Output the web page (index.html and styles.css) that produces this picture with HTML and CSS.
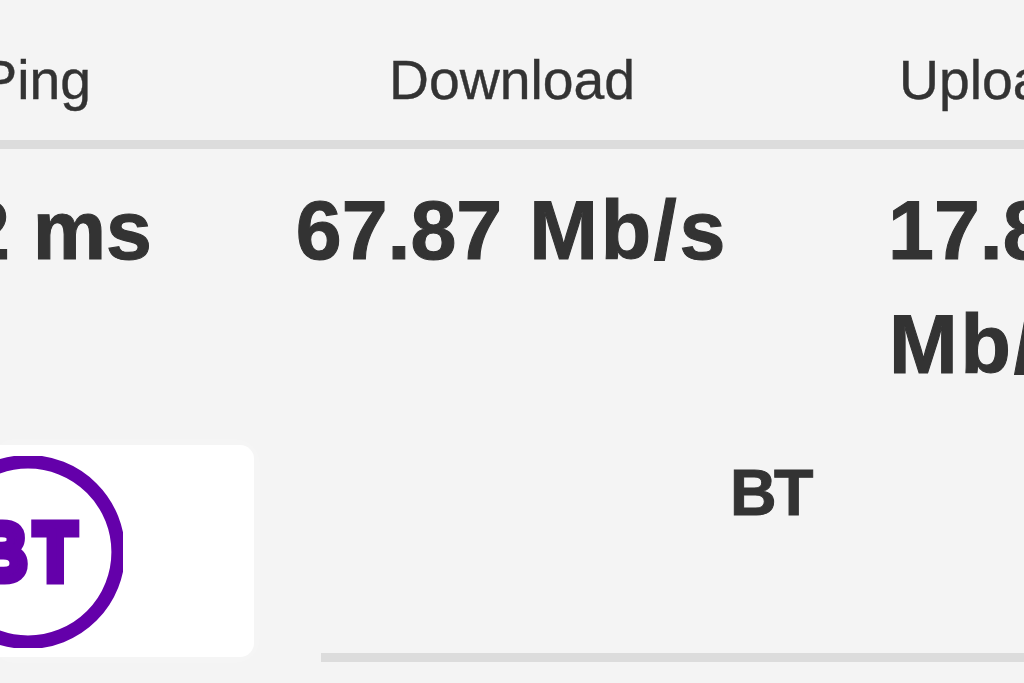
FILE: index.html
```html
<!DOCTYPE html>
<html lang="en">
<head>
<meta charset="utf-8">
<title>Speed test results</title>
<link rel="stylesheet" href="styles.css">
</head>
<body>
<main class="results">
  <div class="row head">
    <div class="ping">Ping</div>
    <div class="download">Download</div>
    <div class="upload">Upload</div>
  </div>
  <div class="row values">
    <div class="ping">2 ms</div>
    <div class="download">67.87 <span class="unit">Mb/s</span></div>
    <div class="upload"><span class="num">17.8</span><br><span class="unit">Mb/s</span></div>
  </div>
  <div class="provider">
    <div class="card">
      <svg class="logo" width="123" height="192" viewBox="0 456 123 192">
        <circle cx="28" cy="552" r="90.2" fill="none" stroke="#6400aa" stroke-width="13.6"/>
        <g class="mark">
          <text transform="translate(-25 580) scale(.88 1)">B</text>
          <text transform="translate(34.2 580) scale(.84 1)">T</text>
        </g>
      </svg>
    </div>
    <div class="name">BT</div>
  </div>
</main>
</body>
</html>
```
FILE: styles.css
```css
body {
  margin: 0;
  background: #f4f4f4;
  color: #333;
  font-family: "Liberation Sans", Arial, sans-serif;
}
.results {
  height: 683px;
  overflow: hidden;
}
.row {
  display: grid;
  grid-template-columns: 250px 524px 250px;
  white-space: nowrap;
}
.head {
  height: 100px;
  padding-top: 40px;
  border-bottom: 9px solid #dcdcdc;
  font-size: 55.3px;
  line-height: 80px;
  -webkit-text-stroke: .4px #333;
}
.values {
  height: 227px;
  padding-top: 24px;
  font-size: 82.5px;
  font-weight: bold;
  line-height: 114px;
  -webkit-text-stroke: 1.1px #333;
}
.values .download { word-spacing: 4px; }
.unit { letter-spacing: 2.8px; }
.ping {
  display: flex;
  justify-content: flex-end;
}
.head .ping { padding-right: 159px; }
.values .ping { padding-right: 98px; }
.download { text-align: center; }
.head .upload { padding-left: 125px; }
.values .upload { padding-left: 115px; }
.values .num { margin-left: -1px; }
.provider {
  display: flex;
  gap: 67px;
  padding-top: 45px;
}
.card {
  flex: none;
  width: 254px;
  height: 201px;
  padding-top: 11px;
  border-radius: 0 14px 14px 0;
  background: #fff;
  box-shadow: 0 0 18px rgba(255, 255, 255, .35);
}
.logo { display: block; }
.mark {
  fill: #6400aa;
  stroke: #6400aa;
  stroke-width: 9px;
  font: bold 82px "Liberation Sans", Arial, sans-serif;
}
.name {
  flex: 1;
  height: 185px;
  padding: 23px 0 0 409px;
  border-bottom: 9px solid #dcdcdc;
  font-size: 64.5px;
  font-weight: bold;
  line-height: 50px;
  letter-spacing: -2.5px;
  -webkit-text-stroke: 1px #333;
}
```
